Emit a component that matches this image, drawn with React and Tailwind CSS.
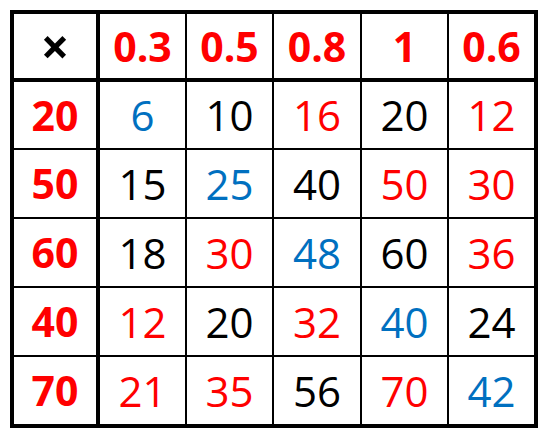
import React from "react";

const R = "text-[#ff0000]";
const B = "text-[#0070c0]";
const K = "text-black";

const header = [
  { t: "×", c: K + " text-[50px]" },
  { t: "0.3", c: R + " text-[41px]" },
  { t: "0.5", c: R + " text-[41px]" },
  { t: "0.8", c: R + " text-[41px]" },
  { t: "1", c: R + " text-[41px]" },
  { t: "0.6", c: R + " text-[41px]" },
];

const rows = [
  ["20", [["6", B], ["10", K], ["16", R], ["20", K], ["12", R]]],
  ["50", [["15", K], ["25", B], ["40", K], ["50", R], ["30", R]]],
  ["60", [["18", K], ["30", R], ["48", B], ["60", K], ["36", R]]],
  ["40", [["12", R], ["20", K], ["32", R], ["40", B], ["24", K]]],
  ["70", [["21", R], ["35", R], ["56", K], ["70", R], ["42", B]]],
];

export default function App() {
  return (
    <div
      className="w-[548px] h-[438px] bg-white p-[10px]"
      style={{ fontFamily: '"Open Sans", "Noto Sans", sans-serif' }}
    >
      <div className="w-[528px] border-4 border-black">
        <div className="grid grid-cols-[84px_85px_85px_86px_85px_85px] grid-rows-[66px_66px_67px_67px_67px_67px] gap-[2px] bg-black">
          {header.map((h, i) => (
            <div
              key={"h" + i}
              className={
                "bg-white flex items-center justify-center border-b-2 border-black font-bold leading-none " +
                h.c +
                (i === 0 ? " border-r-2" : "")
              }
            >
              {h.t}
            </div>
          ))}
          {rows.map(([head, cells], r) => (
            <React.Fragment key={"r" + r}>
              <div className="bg-white flex items-center justify-center border-r-2 border-black font-bold text-[41px] leading-none text-[#ff0000]">
                {head}
              </div>
              {cells.map(([v, c], j) => (
                <div
                  key={j}
                  className={
                    "bg-white flex items-center justify-center text-[42px] leading-none " + c
                  }
                >
                  {v}
                </div>
              ))}
            </React.Fragment>
          ))}
        </div>
      </div>
    </div>
  );
}
